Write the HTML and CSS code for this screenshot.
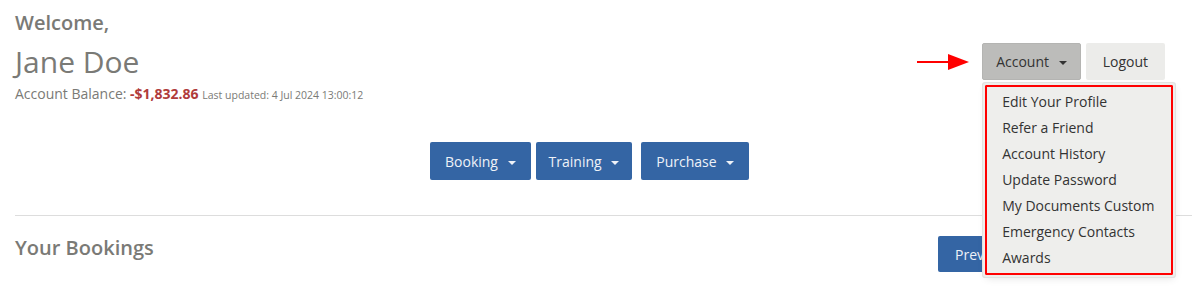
FILE: index.html
```html
<!DOCTYPE html>
<html lang="en">
<head>
    <meta charset="UTF-8">
    <title>Member Dashboard</title>
    <link rel="stylesheet" href="styles.css">
</head>
<body>
    <div class="page">
        <!-- Header -->
        <header class="top">
            <div class="welcome">
                <h3>Welcome,</h3>
                <h1>Jane Doe</h1>
                <p class="balance">Account Balance: <strong>-$1,832.86</strong> <small>Last updated: 4 Jul 2024 13:00:12</small></p>
            </div>
            <div class="user-menu">
                <svg class="pointer" width="52" height="18" viewBox="0 0 52 18">
                    <rect x="0" y="8" width="32" height="2" fill="#f00"/>
                    <polygon points="31,1 52,9 31,17" fill="#f00"/>
                </svg>
                <div class="account">
                    <button class="btn btn-grey active">Account <span class="caret"></span></button>
                    <ul class="dropdown">
                        <li>Edit Your Profile</li>
                        <li>Refer a Friend</li>
                        <li>Account History</li>
                        <li>Update Password</li>
                        <li>My Documents Custom</li>
                        <li>Emergency Contacts</li>
                        <li>Awards</li>
                    </ul>
                </div>
                <button class="btn btn-grey">Logout</button>
            </div>
        </header>

        <!-- Main navigation -->
        <nav class="main-nav">
            <button class="btn btn-blue">Booking <span class="caret"></span></button>
            <button class="btn btn-blue">Training <span class="caret"></span></button>
            <button class="btn btn-blue">Purchase <span class="caret"></span></button>
        </nav>

        <hr>

        <section class="bookings">
            <h3>Your Bookings</h3>
            <div class="pager">
                <button class="btn btn-blue">Previous</button>
            </div>
        </section>
    </div>
</body>
</html>
```

FILE: styles.css
```css
body {
    margin: 0;
    font-family: "Open Sans", "DejaVu Sans", sans-serif;
    color: #333;
    background: #fff;
}
.page {
    padding: 0 0 16px 15px;
}
.top {
    display: flex;
    justify-content: space-between;
    align-items: flex-start;
}
.welcome h3 {
    margin: 10px 0 0;
    font-size: 20px;
    line-height: 26px;
    font-weight: 600;
    color: #7a7a76;
}
.welcome h1 {
    margin: 6px 0 0;
    font-size: 30px;
    line-height: 40px;
    font-weight: 400;
    color: #7a7a76;
}
.balance {
    margin: 2px 0 0;
    font-size: 14px;
    line-height: 20px;
    color: #7a7a76;
}
.balance strong {
    color: #b03b3b;
}
.balance small {
    font-size: 10.5px;
}
.user-menu {
    display: flex;
    align-items: center;
    gap: 5px;
    margin: 43px 27px 0 0;
}
.pointer {
    margin-right: 8px;
}
.btn {
    font-family: inherit;
    font-size: 14px;
    height: 38px;
    padding: 0 14px;
    border: 1px solid transparent;
    border-radius: 2px;
    white-space: nowrap;
    cursor: pointer;
}
.btn-grey {
    background: #ececea;
    color: #333;
    height: 37px;
    padding: 0 16px;
}
.btn-grey.active {
    background: #bcbcba;
    border-color: #b4b4b2;
    padding: 0 13px;
}
.btn-blue {
    background: #3465a4;
    color: #eef2f8;
}
.caret {
    display: inline-block;
    margin-left: 6px;
    vertical-align: middle;
    border-top: 4px solid;
    border-left: 4px solid transparent;
    border-right: 4px solid transparent;
}
.account {
    position: relative;
}
.dropdown {
    position: absolute;
    top: 42px;
    left: 3px;
    z-index: 10;
    width: 184px;
    margin: 0;
    padding: 2px 0;
    list-style: none;
    background: #eeeeec;
    border: 2px solid #f00;
    outline: 2px solid #eeeeec;
    box-shadow: 0 0 0 3px #e2e2e0, 1px 3px 8px rgba(0, 0, 0, 0.12);
    border-radius: 1px;
}
.dropdown li {
    padding: 0 15px;
    font-size: 14px;
    line-height: 26px;
    color: #333;
    white-space: nowrap;
}
.main-nav {
    display: flex;
    gap: 5px;
    margin: 37px 0 0 415px;
}
.main-nav .btn:nth-child(2) {
    padding: 0 12px;
}
.main-nav .btn:nth-child(3) {
    margin-left: 4px;
}
hr {
    margin: 35px 0 0;
    border: 0;
    border-top: 1px solid #dddddd;
}
.bookings {
    display: flex;
    justify-content: space-between;
    align-items: flex-start;
}
.bookings h3 {
    margin: 19px 0 0;
    font-size: 20px;
    line-height: 26px;
    font-weight: 600;
    color: #7a7a76;
}
.pager {
    margin: 20px 144px 0 0;
}
.pager .btn {
    height: 36px;
    width: 110px;
    text-align: left;
    padding-left: 16px;
}
```
